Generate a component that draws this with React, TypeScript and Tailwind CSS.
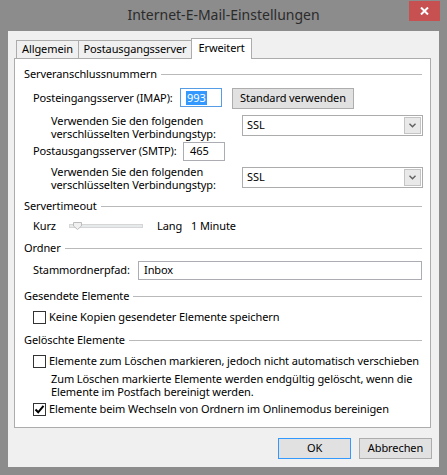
import type { ReactNode } from "react";

function SectionHeader({ title }: { title: string }) {
  return (
    <div className="flex items-center h-[16px] pl-[9px] pr-[8px] gap-[4px]">
      <span className="whitespace-nowrap">{title}</span>
      <div className="flex-1 h-px bg-[#b9b9b9]" />
    </div>
  );
}

function TextBox({ children, focused, className }: { children: ReactNode; focused?: boolean; className: string }) {
  return (
    <div
      className={`h-[19px] bg-white border flex items-center pl-[5px] ${
        focused ? "border-[#569de5]" : "border-[#abadb3]"
      } ${className}`}
    >
      {children}
    </div>
  );
}

function Combo({ value }: { value: string }) {
  return (
    <div className="w-[181px] h-[21px] bg-white border border-[#acacac] flex items-center justify-between pl-[4px] pr-[1px]">
      <span>{value}</span>
      <div className="w-[17px] h-[17px] bg-[#e9e9e9] border border-[#c4c4c4] flex items-center justify-center">
        <svg width="7" height="5" viewBox="0 0 7 5">
          <path d="M0.5 0.8 L3.5 3.8 L6.5 0.8" fill="none" stroke="#606060" strokeWidth="1.4" />
        </svg>
      </div>
    </div>
  );
}

function CheckBox({ checked }: { checked?: boolean }) {
  return (
    <div className="w-[13px] h-[13px] bg-white border border-[#333333] flex items-center justify-center">
      {checked && (
        <svg width="11" height="11" viewBox="0 0 11 11">
          <path d="M1.5 5.5 L4.2 8.3 L9.5 1.8" fill="none" stroke="#000" strokeWidth="2" />
        </svg>
      )}
    </div>
  );
}

function Button({ label, primary }: { label: string; primary?: boolean }) {
  return (
    <div
      className={`w-[73px] h-[21px] bg-[#e1e1e1] border flex items-center justify-center ${
        primary ? "border-[#3399ff]" : "border-[#adadad]"
      }`}
    >
      {label}
    </div>
  );
}

export default function App() {
  return (
    <div className="w-[447px] h-[475px] bg-[#8c8c8c] flex flex-col font-['Noto_Sans',sans-serif] text-[11px] tracking-[-0.1px] text-black select-none">
      {/* Title bar */}
      <div className="h-[31px] grid grid-cols-[1fr_auto_1fr] items-start">
        <div />
        <div className="pt-[5px] text-[14px] tracking-normal text-[#2b2b2b] leading-[20px]">Internet-E-Mail-Einstellungen</div>
        <div className="flex justify-end pr-[7px] pt-[1px]">
          <div className="w-[31px] h-[20px] bg-[#c75050] flex items-center justify-center">
            <svg width="9" height="8" viewBox="0 0 9 8">
              <path d="M1 0.5 L8 7.5 M8 0.5 L1 7.5" stroke="#fff" strokeWidth="2" />
            </svg>
          </div>
        </div>
      </div>

      {/* Client area */}
      <div className="mx-[8px] h-[436px] bg-[#f0f0f0] flex flex-col">
        {/* Tabs */}
        <div className="mt-[7px] ml-[8px] h-[21px] flex items-end">
          <div className="w-[63px] h-[18px] mb-px border border-b-0 border-[#acacac] bg-[#f0f0f0] flex items-center justify-center">
            Allgemein
          </div>
          <div className="w-[113px] h-[18px] mb-px border border-l-0 border-b-0 border-[#acacac] bg-[#f0f0f0] flex items-center justify-center">
            Postausgangsserver
          </div>
          <div className="relative z-10 -ml-px w-[61px] h-[21px] border border-b-0 border-[#acacac] bg-white flex items-center justify-center pb-[2px]">
            Erweitert
          </div>
        </div>

        {/* Panel */}
        <div className="-mt-px ml-[6px] mr-[8px] h-[370px] bg-white border border-[#acacac] flex flex-col">
          <div className="mt-[7px]">
            <SectionHeader title="Serveranschlussnummern" />
          </div>

          <div className="mt-[6px] h-[21px] flex items-start pl-[18px]">
            <div className="w-[147px] h-[21px] flex items-center">Posteingangsserver (IMAP):</div>
            <TextBox focused className="w-[42px]">
              <span className="bg-[#3399ff] text-white leading-[14px] px-px">993</span>
            </TextBox>
            <div className="ml-[10px] w-[122px] h-[21px] bg-[#e1e1e1] border border-[#adadad] flex items-center justify-center">
              Standard verwenden
            </div>
          </div>

          <div className="mt-[6px] h-[24px] flex items-start pl-[36px]">
            <div className="w-[191px] leading-[13px] -mt-px">
              Verwenden Sie den folgenden
              <br />
              verschlüsselten Verbindungstyp:
            </div>
            <Combo value="SSL" />
          </div>

          <div className="mt-[3px] h-[19px] flex items-center pl-[18px]">
            <div className="w-[150px]">Postausgangsserver (SMTP):</div>
            <TextBox className="w-[42px]">
              <span className="pl-px">465</span>
            </TextBox>
          </div>

          <div className="mt-[5px] h-[24px] flex items-start pl-[36px]">
            <div className="w-[191px] leading-[13px] -mt-px">
              Verwenden Sie den folgenden
              <br />
              verschlüsselten Verbindungstyp:
            </div>
            <div className="mt-px">
              <Combo value="SSL" />
            </div>
          </div>

          <div className="mt-[8px]">
            <SectionHeader title="Servertimeout" />
          </div>

          <div className="mt-[4px] h-[16px] flex items-center pl-[18px]">
            <div className="w-[36px]">Kurz</div>
            <div className="relative w-[74px] h-[4px] bg-[#e7eaea] border border-[#d6d6d6]">
              <svg className="absolute left-[3px] -top-[3px]" width="9" height="8" viewBox="0 0 9 8">
                <path d="M0.5 0.5 H8.5 V4 L4.5 7.5 L0.5 4 Z" fill="#f0f0f0" stroke="#bcbcbc" />
              </svg>
            </div>
            <div className="ml-[14px] w-[34px]">Lang</div>
            <div>1 Minute</div>
          </div>

          <div className="mt-[6px]">
            <SectionHeader title="Ordner" />
          </div>

          <div className="mt-[5px] h-[19px] flex items-center pl-[18px] pr-[8px]">
            <div className="w-[105px]">Stammordnerpfad:</div>
            <TextBox className="flex-1">
              <span>Inbox</span>
            </TextBox>
          </div>

          <div className="mt-[8px]">
            <SectionHeader title="Gesendete Elemente" />
          </div>

          <div className="mt-[5px] h-[16px] flex items-center pl-[18px] gap-[3px]">
            <CheckBox />
            <span>Keine Kopien gesendeter Elemente speichern</span>
          </div>

          <div className="mt-[7px]">
            <SectionHeader title="Gelöschte Elemente" />
          </div>

          <div className="mt-[5px] h-[16px] flex items-center pl-[18px] gap-[3px]">
            <CheckBox />
            <span className="whitespace-nowrap">Elemente zum Löschen markieren, jedoch nicht automatisch verschieben</span>
          </div>

          <div className="mt-[3px] h-[26px] pl-[36px] leading-[13px]">
            Zum Löschen markierte Elemente werden endgültig gelöscht, wenn die
            <br />
            Elemente im Postfach bereinigt werden.
          </div>

          <div className="mt-[3px] h-[16px] flex items-center pl-[18px] gap-[3px]">
            <CheckBox checked />
            <span>Elemente beim Wechseln von Ordnern im Onlinemodus bereinigen</span>
          </div>
        </div>

        {/* Dialog buttons */}
        <div className="mt-[10px] flex justify-end gap-[8px] pr-[7px]">
          <Button label="OK" primary />
          <Button label="Abbrechen" />
        </div>
      </div>
    </div>
  );
}
